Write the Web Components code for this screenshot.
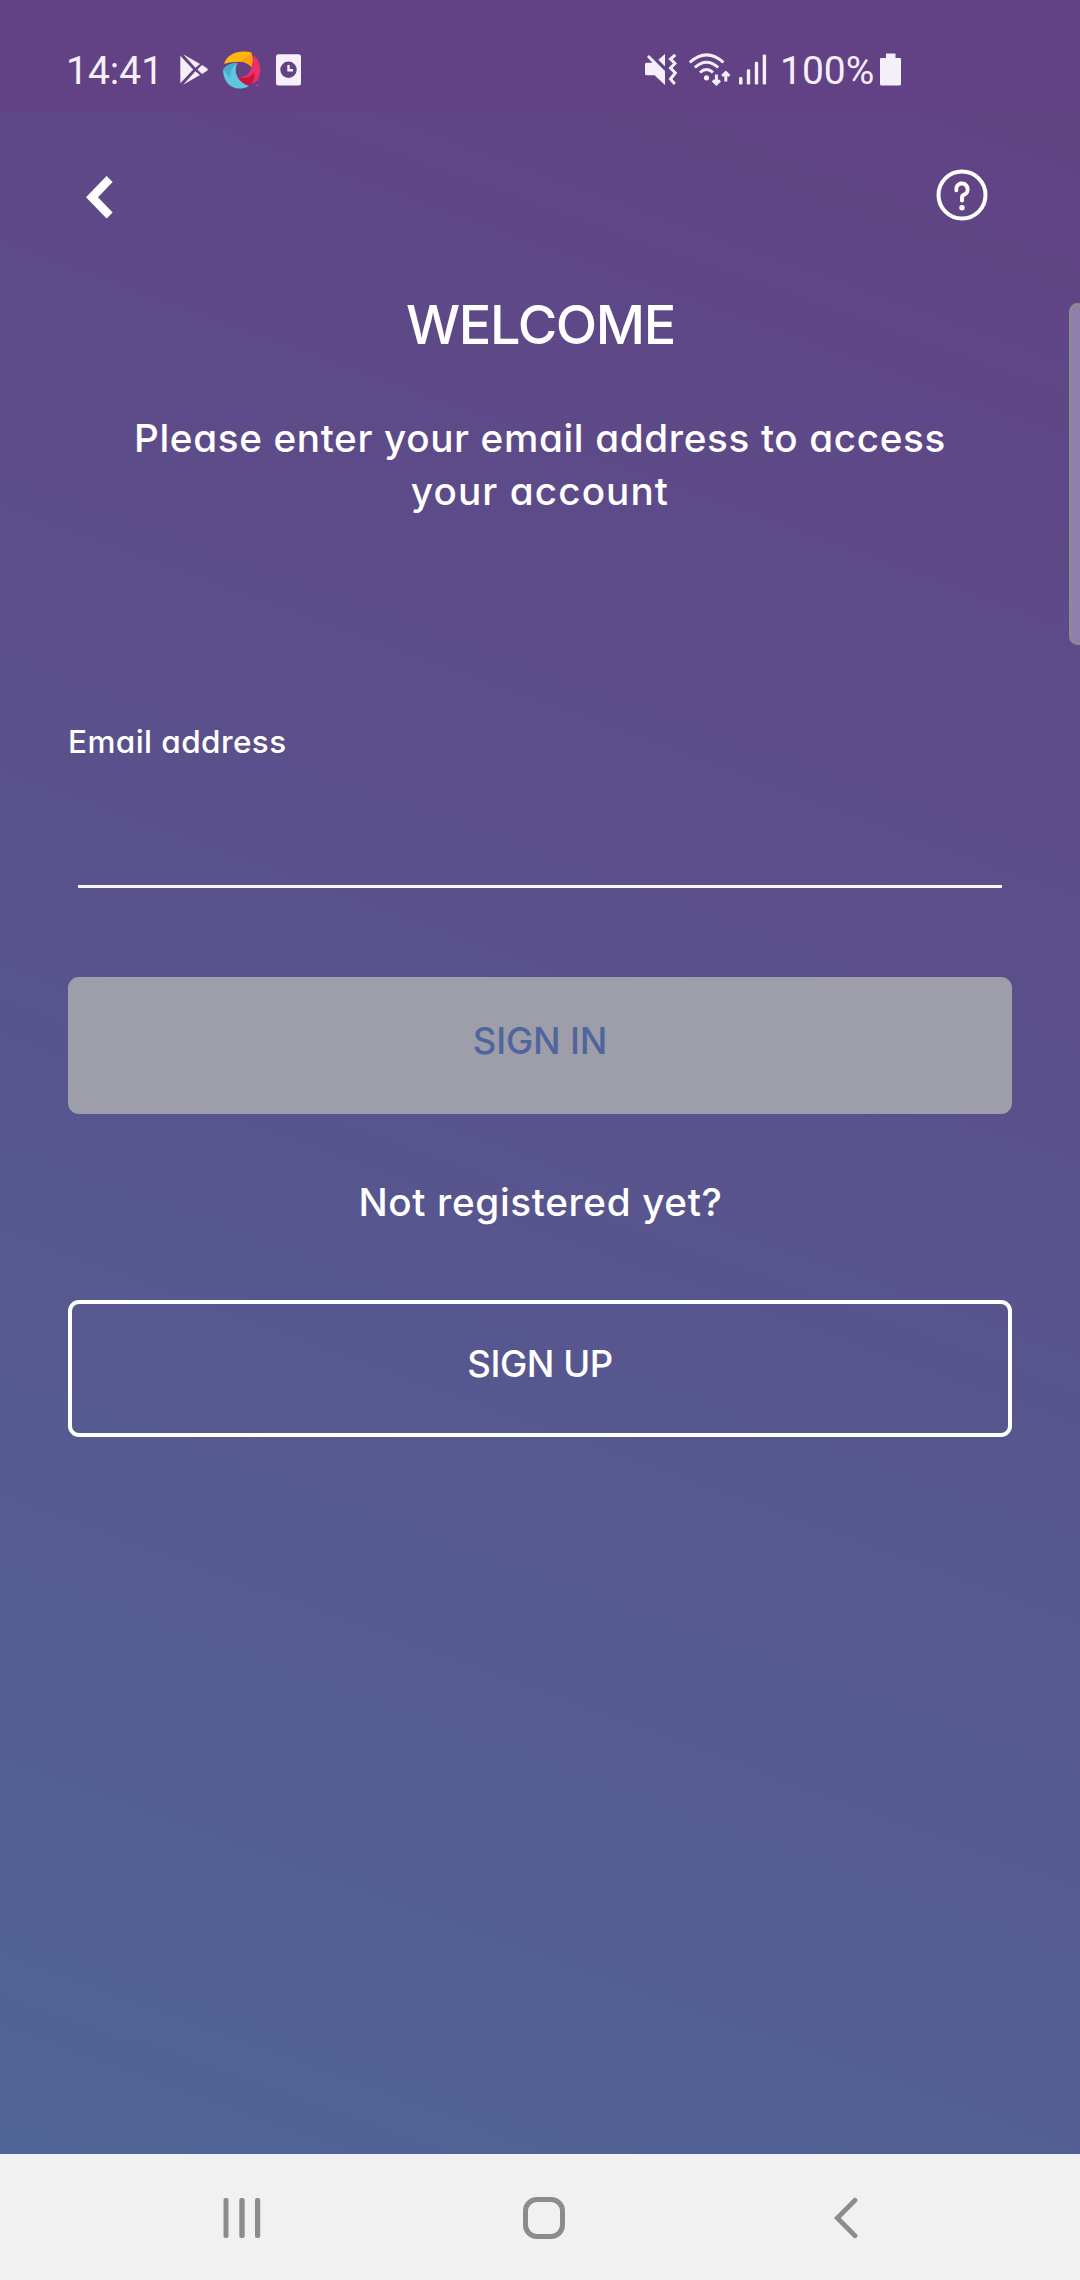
<!DOCTYPE html>
<html lang="en">
<head>
<meta charset="utf-8">
<title>Welcome</title>
<style>
  html, body { margin: 0; width: 1080px; height: 2280px; overflow: hidden; }
</style>
</head>
<body>
<welcome-screen></welcome-screen>
<script>
const ICONS = {
  play: [28, 31, `<g fill="currentColor"><path d="M.3 1.8V29.2L13.2 15.5Z"/><path d="M3.2.3 20 10 15.4 13.7Z"/><path d="M3.2 30.7 20 21 15.4 17.3Z"/><path d="M22 11 27 14.2Q28.6 15.5 27 16.8L22 20 17.4 15.5Z"/></g>`],
  swirl: [38, 38, `<path fill="#ffb70f" d="M1 13C4 3 15-1.500 28 1.2C30 6 30.2 11 28.500 16C25 12 20 10 14.500 11Q7 10.500 1 13Z"/><path fill="#ff9f0f" d="M14.500 11C21 9 26 5 28 1.200C30 6 30.200 11 28.500 16C25 12 20 10 14.500 11Z"/>
    <path fill="#ec2f68" d="M30.500 4C38 10 39.500 21 34 30C26 36 18 32 14.500 26C24 27 29.500 22 30.500 4Z"/><path fill="#c9153f" d="M14.500 26C22 28 28 26 31 21.500C32.500 25 31 31 26.500 34.500C20 33.500 17 30.500 14.500 26Z"/><path fill="#ec2f68" d="M33 33.500h3v1.300h-3z"/>
    <path fill="#5fc4dd" d="M0 18.500C4 13.500 9 11.500 14.500 12.300C10 21 14.500 31 26 35C18 39.500 9 38 4 31.500C1 27.500 0 23 0 18.500Z"/><path fill="#43afc9" d="M0 18.500C4 13.500 9 11.500 14.500 12.300C9 16 6.500 21 7 27C4 23 2 20.500 0 18.500Z"/>`],
  clock: [25, 32, `<rect y=".3" width="25" height="31.200" rx="2.500" fill="currentColor"/><circle cx="12.500" cy="15.700" r="8.200" fill="#624284"/><path d="M12.500 11V16.300H17" fill="none" stroke="currentColor" stroke-width="2.400"/>`],
  mute: [32, 31, `<path fill="currentColor" d="M2 3 4 1 20 17V31L9.500 21.300H1.500Q0 21.300 0 19.800V10.300Q0 8.800 1.500 8.800H7.500Z"/><path fill="currentColor" d="M13.300 5.800 20 0V12.500Z"/><path d="M30.300.8 25.500 5 30 9.500 25.500 14 30.300 19 25.500 25 29.800 30" fill="none" stroke="currentColor" stroke-width="3"/>`],
  wifi: [42, 34, `<g fill="none" stroke="currentColor" stroke-width="3"><path d="M.8 9.500Q17.500-5.800 34.500 9.500"/><path d="M5.800 14.500Q17.500 4 29.200 14.500"/><path d="M11 19.500Q17.500 13.500 24 19.500"/><path d="M27.400 21.500V30M23.800 27.300 27.400 30.800 31 27.300M36.800 28.500V20M33.200 23 36.800 19.500 40.400 23"/></g><circle cx="17.500" cy="24.800" r="2.600" fill="currentColor"/>`],
  signal: [28, 31, `<g fill="currentColor"><rect y="23" width="3.500" height="7.500" rx="1.200"/><rect x="7.800" y="15.300" width="3.400" height="15.200" rx="1.200"/><rect x="15.800" y="7.800" width="3.400" height="22.700" rx="1.200"/><rect x="23.700" y=".4" width="3.400" height="30.100" rx="1.200"/></g>`],
  battery: [21, 33, `<path fill="currentColor" d="M6 .5H15.500V5H20Q21 5 21 6V31Q21 32.500 19.500 32.500H1.500Q0 32.500 0 31V6Q0 5 1 5H6Z"/>`],
  back: [27, 43, `<path fill="currentColor" d="M20.600 0 26.600 6 12 21.300 26.600 36.600 20.600 42.600 0 21.300Z"/>`],
  help: [52, 52, `<g fill="none" stroke="currentColor" stroke-width="4" stroke-linecap="round"><circle cx="26" cy="26" r="23.500"/><path d="M20.300 21.200A5.700 5.900 0 1 1 27.800 25.900Q26 26.600 26 28.500V31.500"/></g><circle cx="26" cy="38.800" r="2.700" fill="currentColor"/>`],
  recents: [38, 42, `<g fill="currentColor"><rect x=".5" y="1" width="5" height="40" rx="2"/><rect x="16.300" y="1" width="5.400" height="40" rx="2"/><rect x="32" y="1" width="5.200" height="40" rx="2"/></g>`],
  home: [42, 42, `<rect x="2.500" y="2.500" width="37" height="37" rx="11.500" fill="none" stroke="currentColor" stroke-width="5"/>`],
  navback: [24, 42, `<path d="M21 3.300 3.300 21 21 38.700" fill="none" stroke="currentColor" stroke-width="4.800" stroke-linecap="round"/>`]
};

function define(name, html) {
  const template = document.createElement('template');
  template.innerHTML = html;
  customElements.define(name, class extends HTMLElement {
    constructor() {
      super();
      this.attachShadow({ mode: 'open' }).append(template.content.cloneNode(true));
    }
  });
}

customElements.define('ui-icon', class extends HTMLElement {
  connectedCallback() {
    const [w, h, body] = ICONS[this.getAttribute('name')];
    const root = this.shadowRoot || this.attachShadow({ mode: 'open' });
    root.innerHTML = `<style>:host{display:block;flex:none}svg{display:block}</style><svg width="${w}" height="${h}" viewBox="0 0 ${w} ${h}" aria-hidden="true">${body}</svg>`;
  }
});

define('status-bar', `
  <style>
    :host { display: flex; align-items: center; box-sizing: border-box; height: 112px; padding: 27px 179px 0 66px;
      background: #624284; color: #f4eff8; font: 400 39px/1 Roboto, sans-serif; }
    .group { display: flex; align-items: center; }
    .time { width: 114px; padding-top: 3px; }
    .apps { gap: 15px; }
    .system { margin-left: auto; }
    .level { width: 100px; padding-top: 3px; }
    .mute { margin-right: 12px; } .wifi { margin-right: 8px; } .signal { margin-right: 13px; }
  </style>
  <span class="time">14:41</span>
  <div class="group apps"><ui-icon name="play"></ui-icon><ui-icon name="swirl"></ui-icon><ui-icon name="clock"></ui-icon></div>
  <div class="group system">
    <ui-icon class="mute" name="mute"></ui-icon><ui-icon class="wifi" name="wifi"></ui-icon><ui-icon class="signal" name="signal"></ui-icon>
    <span class="level">100%</span><ui-icon name="battery"></ui-icon>
  </div>`);

define('app-bar', `
  <style>
    :host { display: flex; justify-content: space-between; align-items: flex-start; box-sizing: border-box;
      height: 172px; padding: 57.4px 92.500px 0 86px; }
    .back { margin-top: 6.300px; }
  </style>
  <ui-icon class="back" name="back"></ui-icon><ui-icon name="help"></ui-icon>`);

define('text-field', `
  <style>
    :host { display: flex; flex-direction: column; height: 166px; }
    label { font-size: 31.5px; line-height: 40px; letter-spacing: .42px; }
    .input { flex: 1; margin: 0 10px; border-bottom: 3px solid #f8f6fb; }
  </style>
  <label><slot></slot></label><div class="input"></div>`);

define('action-button', `
  <style>
    :host { display: flex; align-items: center; justify-content: center; box-sizing: border-box; height: 137px;
      padding-bottom: 10px; border: 4px solid #fff; border-radius: 11px; font-size: 36.5px; line-height: 50px; letter-spacing: -.45px; }
    :host([disabled]) { background: #9d9ea9; border-color: #9d9ea9; color: #51659d; letter-spacing: -.2px; }
  </style>
  <slot></slot>`);

define('nav-bar', `
  <style>
    :host { display: flex; box-sizing: border-box; height: 126px; padding: 2px 83px 0 91px; background: #f1f1f1; color: #8c8c8c; }
    div { flex: 1; display: flex; align-items: center; justify-content: center; }
  </style>
  <div><ui-icon name="recents"></ui-icon></div><div><ui-icon name="home"></ui-icon></div><div><ui-icon name="navback"></ui-icon></div>`);

define('welcome-screen', `
  <style>
    :host { display: flex; flex-direction: column; position: relative; width: 1080px; height: 2280px; overflow: hidden; }
    main { flex: 1; color: #fff; background: linear-gradient(200deg, #624183 -4.5%, #506597);
      font-family: Inter, sans-serif; font-weight: 540; font-feature-settings: "cv11"; }
    section { display: flex; flex-direction: column; padding: 0 68px; }
    h1 { margin: 1px 0 47px 1px; text-align: center; font-size: 54px; font-weight: 540; line-height: 80px; letter-spacing: -1.4px; }
    p { margin: 0; text-align: center; font-size: 38.7px; line-height: 53px; letter-spacing: .63px; white-space: nowrap; }
    .intro { margin-bottom: 204px; }
    .wide { letter-spacing: 1.1px; }
    text-field { margin-bottom: 89px; }
    .hint { margin: 62px 0 71px 1px; }
    .edge { position: absolute; right: -6px; top: 303px; box-sizing: border-box; width: 17px; height: 342px;
      border: 3px solid #8c8894; border-radius: 11px; background: #8e7eab; }
  </style>
  <status-bar></status-bar>
  <main>
    <app-bar></app-bar>
    <section>
      <h1>WELCOME</h1>
      <p class="intro">Please enter your email address to access<br><span class="wide">your account</span></p>
      <text-field>Email address</text-field>
      <action-button disabled>SIGN IN</action-button>
      <p class="hint">Not registered yet?</p>
      <action-button>SIGN UP</action-button>
    </section>
  </main>
  <nav-bar></nav-bar>
  <div class="edge"></div>`);
</script>
</body>
</html>
